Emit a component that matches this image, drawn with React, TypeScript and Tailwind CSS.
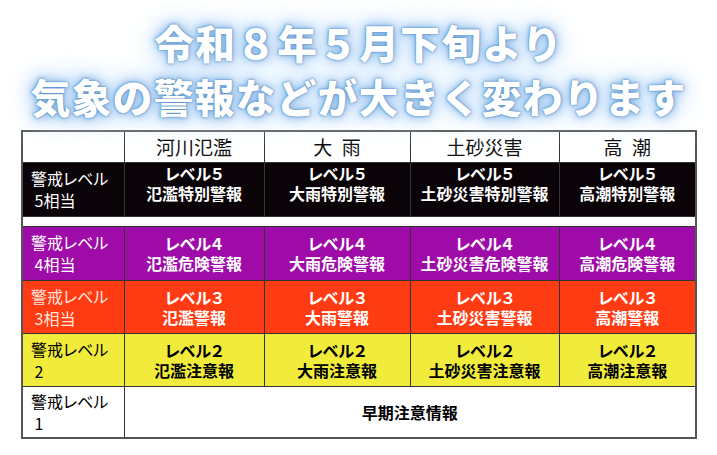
const jp = "font-['Noto_Sans_CJK_JP','Noto_Sans',sans-serif]";

interface LevelRow {
  bg: string;
  main: string;
  side: string;
  height: string;
  pad: string;
  level: string;
  label: string;
  items: string[];
}

const rows: LevelRow[] = [
  {
    bg: 'bg-[#0a0307]',
    main: 'text-white',
    side: 'text-white',
    height: 'h-[54px]',
    pad: 'pb-[12px]',
    level: 'レベル５',
    label: '\u00a05相当',
    items: ['氾濫特別警報', '大雨特別警報', '土砂災害特別警報', '高潮特別警報'],
  },
  {
    bg: 'bg-[#9e0ba8]',
    main: 'text-white',
    side: 'text-white',
    height: 'h-[54px]',
    pad: 'pb-0',
    level: 'レベル４',
    label: '\u00a04相当',
    items: ['氾濫危険警報', '大雨危険警報', '土砂災害危険警報', '高潮危険警報'],
  },
  {
    bg: 'bg-[#ff3b14]',
    main: 'text-white',
    side: 'text-[#ffe3dc]',
    height: 'h-[53px]',
    pad: 'pb-0',
    level: 'レベル３',
    label: '\u00a03相当',
    items: ['氾濫警報', '大雨警報', '土砂災害警報', '高潮警報'],
  },
  {
    bg: 'bg-[#f1ec3c]',
    main: 'text-black',
    side: 'text-black',
    height: 'h-[53px]',
    pad: 'pb-0',
    level: 'レベル２',
    label: '\u00a02',
    items: ['氾濫注意報', '大雨注意報', '土砂災害注意報', '高潮注意報'],
  },
];

const headers = ['河川氾濫', '大\u2002雨', '土砂災害', '高\u2002潮'];

function SideLabel({ label, color }: { label: string; color: string }) {
  return (
    <div className={`pl-[8px] text-left text-[16px] leading-[22px] [font-feature-settings:'palt'] ${color}`}>
      <div>警戒レベル</div>
      <div>{label}</div>
    </div>
  );
}

export default function App() {
  return (
    <div className={`w-[717px] h-[455px] bg-white overflow-hidden ${jp}`}>
      <div className="h-[130px] pt-[15px] text-center">
        <h1 className="text-[40px] leading-[54px] font-black tracking-[1px] text-white [text-shadow:0_0_1px_#3f76ad,0_0_3px_#5b92cc,0_0_8px_#7cb1e6,0_0_16px_#a0caf2,0_0_28px_#c4def8,0_0_44px_#dbeafa]">
          <div>令和８年５月下旬より</div>
          <div>気象の警報などが大きく変わります</div>
        </h1>
      </div>

      <table className="ml-[21px] w-[674px] table-fixed border-collapse border-2 border-[#555]">
        <colgroup>
          <col className="w-[102px]" />
          <col className="w-[140px]" />
          <col className="w-[146px]" />
          <col className="w-[149px]" />
          <col className="w-[137px]" />
        </colgroup>
        <tbody>
          <tr className="h-[31px] bg-white">
            <td className="border border-[#333]" />
            {headers.map((h) => (
              <td key={h} className="border border-[#333] text-center text-[19px] leading-none text-[#111]">
                {h}
              </td>
            ))}
          </tr>

          {rows.map((row, i) => (
            <>
              {i === 1 && (
                <tr key="gap" className="h-[10px] bg-white">
                  <td colSpan={5} className="p-0" />
                </tr>
              )}
              <tr key={row.level} className={`${row.height} ${row.bg}`}>
                <td className="border border-[#333] align-middle">
                  <SideLabel label={row.label} color={row.side} />
                </td>
                {row.items.map((item) => (
                  <td
                    key={item}
                    className={`border border-[#333] align-middle text-center font-bold text-[16px] leading-[20px] ${row.main} ${row.pad}`}
                  >
                    <div className="[font-feature-settings:'palt']">{row.level}</div>
                    <div>{item}</div>
                  </td>
                ))}
              </tr>
            </>
          ))}

          <tr className="h-[52px] bg-white">
            <td className="border border-[#333] align-middle">
              <SideLabel label={'\u00a01'} color="text-black" />
            </td>
            <td colSpan={4} className="border border-[#333] text-center font-bold text-[16px] text-black">
              早期注意情報
            </td>
          </tr>
        </tbody>
      </table>
    </div>
  );
}
